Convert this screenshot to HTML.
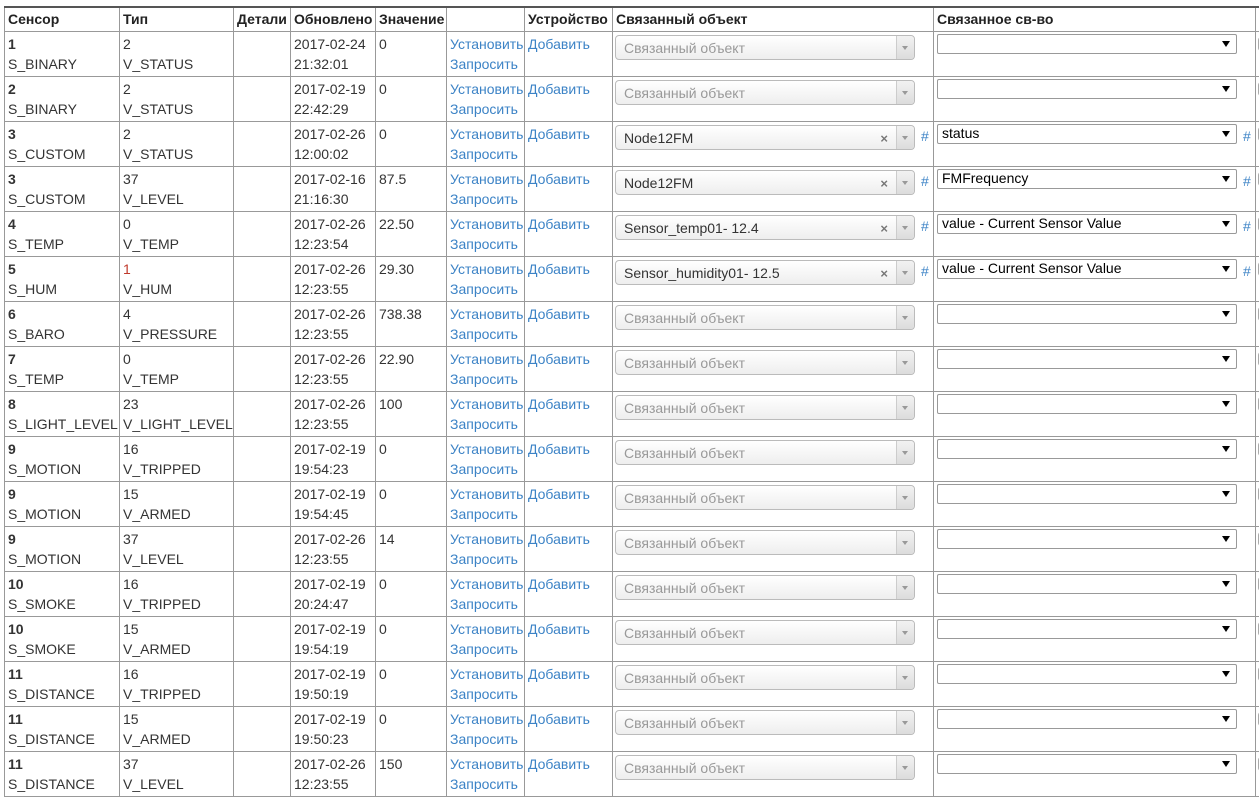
<!DOCTYPE html>
<html><head><meta charset="utf-8"><style>
body{margin:0;background:#fff;font-family:"Liberation Sans",Arial,sans-serif;font-size:14px;color:#333;overflow:hidden;width:1259px;height:803px}
table{position:absolute;left:4px;top:6px;border-collapse:collapse;table-layout:fixed;width:1300px}
td,th{border:1px solid #999;padding:2px 3px 0 3px;vertical-align:top;line-height:20px;text-align:left;white-space:nowrap;overflow:hidden}
th{height:22px;padding-top:1px;font-weight:bold;color:#222;border-top:2px solid #555}
td{height:42px;position:relative}
a{color:#3c83c6;text-decoration:none}
.s2{position:absolute;left:2px;top:3px;width:298px;height:23px;border:1px solid #bbb;border-radius:4px;background:linear-gradient(#fff,#eee);color:#999}
.s2 span{position:absolute;left:8px;top:2px}
.s2 .ar{position:absolute;right:0;top:0;width:17px;height:23px;border-left:1px solid #ccc;background:linear-gradient(#f2f2f2,#dcdcdc);border-radius:0 4px 4px 0}
.s2 .ar:after{content:"";position:absolute;left:5px;top:10px;border:3px solid transparent;border-top:4px solid #999}
.s2.v{color:#333;background:linear-gradient(#fff,#eee)}
.s2 .x{position:absolute;right:26px;top:3px;color:#777;font-size:13px;font-weight:bold}
.h1{position:absolute;left:308px;top:4px;color:#3c83c6}
.ns{position:absolute;left:3px;top:2px;width:298px;height:18px;border:1px solid #999;border-radius:2px;background:#fff;color:#000;line-height:17px}
.ns span{position:absolute;left:4px;top:0}
.ns:after{content:"";position:absolute;right:6px;top:6px;border:4px solid transparent;border-top:6px solid #000;border-bottom:0}
.h2{position:absolute;left:309px;top:4px;color:#3c83c6}
.cb{position:absolute;left:2px;top:5px;width:10px;height:12px;border:1px solid #aaa;border-radius:3px}
</style></head><body>
<table>
<colgroup><col style="width:115px"><col style="width:114px"><col style="width:57px"><col style="width:85px"><col style="width:71px"><col style="width:78px"><col style="width:88px"><col style="width:321px"><col style="width:322px"><col style="width:49px"></colgroup>
<tr><th>Сенсор</th><th>Тип</th><th>Детали</th><th>Обновлено</th><th>Значение</th><th></th><th>Устройство</th><th>Связанный объект</th><th>Связанное св-во</th><th>А</th></tr>
<tr><td><b>1</b><br>S_BINARY</td><td>2<br>V_STATUS</td><td></td><td>2017-02-24<br>21:32:01</td><td>0</td><td><a>Установить</a><br><a>Запросить</a></td><td><a>Добавить</a></td><td><div class="s2"><span>Связанный объект</span><div class="ar"></div></div></td><td><div class="ns"></div></td><td><div class="cb"></div></td></tr>
<tr><td><b>2</b><br>S_BINARY</td><td>2<br>V_STATUS</td><td></td><td>2017-02-19<br>22:42:29</td><td>0</td><td><a>Установить</a><br><a>Запросить</a></td><td><a>Добавить</a></td><td><div class="s2"><span>Связанный объект</span><div class="ar"></div></div></td><td><div class="ns"></div></td><td><div class="cb"></div></td></tr>
<tr><td><b>3</b><br>S_CUSTOM</td><td>2<br>V_STATUS</td><td></td><td>2017-02-26<br>12:00:02</td><td>0</td><td><a>Установить</a><br><a>Запросить</a></td><td><a>Добавить</a></td><td><div class="s2 v"><span>Node12FM</span><b class="x">×</b><div class="ar"></div></div><span class="h1">#</span></td><td><div class="ns"><span>status</span></div><span class="h2">#</span></td><td><div class="cb"></div></td></tr>
<tr><td><b>3</b><br>S_CUSTOM</td><td>37<br>V_LEVEL</td><td></td><td>2017-02-16<br>21:16:30</td><td>87.5</td><td><a>Установить</a><br><a>Запросить</a></td><td><a>Добавить</a></td><td><div class="s2 v"><span>Node12FM</span><b class="x">×</b><div class="ar"></div></div><span class="h1">#</span></td><td><div class="ns"><span>FMFrequency</span></div><span class="h2">#</span></td><td><div class="cb"></div></td></tr>
<tr><td><b>4</b><br>S_TEMP</td><td>0<br>V_TEMP</td><td></td><td>2017-02-26<br>12:23:54</td><td>22.50</td><td><a>Установить</a><br><a>Запросить</a></td><td><a>Добавить</a></td><td><div class="s2 v"><span>Sensor_temp01- 12.4</span><b class="x">×</b><div class="ar"></div></div><span class="h1">#</span></td><td><div class="ns"><span>value - Current Sensor Value</span></div><span class="h2">#</span></td><td><div class="cb"></div></td></tr>
<tr><td><b>5</b><br>S_HUM</td><td><span style="color:#c0392b">1</span><br>V_HUM</td><td></td><td>2017-02-26<br>12:23:55</td><td>29.30</td><td><a>Установить</a><br><a>Запросить</a></td><td><a>Добавить</a></td><td><div class="s2 v"><span>Sensor_humidity01- 12.5</span><b class="x">×</b><div class="ar"></div></div><span class="h1">#</span></td><td><div class="ns"><span>value - Current Sensor Value</span></div><span class="h2">#</span></td><td><div class="cb"></div></td></tr>
<tr><td><b>6</b><br>S_BARO</td><td>4<br>V_PRESSURE</td><td></td><td>2017-02-26<br>12:23:55</td><td>738.38</td><td><a>Установить</a><br><a>Запросить</a></td><td><a>Добавить</a></td><td><div class="s2"><span>Связанный объект</span><div class="ar"></div></div></td><td><div class="ns"></div></td><td><div class="cb"></div></td></tr>
<tr><td><b>7</b><br>S_TEMP</td><td>0<br>V_TEMP</td><td></td><td>2017-02-26<br>12:23:55</td><td>22.90</td><td><a>Установить</a><br><a>Запросить</a></td><td><a>Добавить</a></td><td><div class="s2"><span>Связанный объект</span><div class="ar"></div></div></td><td><div class="ns"></div></td><td><div class="cb"></div></td></tr>
<tr><td><b>8</b><br>S_LIGHT_LEVEL</td><td>23<br>V_LIGHT_LEVEL</td><td></td><td>2017-02-26<br>12:23:55</td><td>100</td><td><a>Установить</a><br><a>Запросить</a></td><td><a>Добавить</a></td><td><div class="s2"><span>Связанный объект</span><div class="ar"></div></div></td><td><div class="ns"></div></td><td><div class="cb"></div></td></tr>
<tr><td><b>9</b><br>S_MOTION</td><td>16<br>V_TRIPPED</td><td></td><td>2017-02-19<br>19:54:23</td><td>0</td><td><a>Установить</a><br><a>Запросить</a></td><td><a>Добавить</a></td><td><div class="s2"><span>Связанный объект</span><div class="ar"></div></div></td><td><div class="ns"></div></td><td><div class="cb"></div></td></tr>
<tr><td><b>9</b><br>S_MOTION</td><td>15<br>V_ARMED</td><td></td><td>2017-02-19<br>19:54:45</td><td>0</td><td><a>Установить</a><br><a>Запросить</a></td><td><a>Добавить</a></td><td><div class="s2"><span>Связанный объект</span><div class="ar"></div></div></td><td><div class="ns"></div></td><td><div class="cb"></div></td></tr>
<tr><td><b>9</b><br>S_MOTION</td><td>37<br>V_LEVEL</td><td></td><td>2017-02-26<br>12:23:55</td><td>14</td><td><a>Установить</a><br><a>Запросить</a></td><td><a>Добавить</a></td><td><div class="s2"><span>Связанный объект</span><div class="ar"></div></div></td><td><div class="ns"></div></td><td><div class="cb"></div></td></tr>
<tr><td><b>10</b><br>S_SMOKE</td><td>16<br>V_TRIPPED</td><td></td><td>2017-02-19<br>20:24:47</td><td>0</td><td><a>Установить</a><br><a>Запросить</a></td><td><a>Добавить</a></td><td><div class="s2"><span>Связанный объект</span><div class="ar"></div></div></td><td><div class="ns"></div></td><td><div class="cb"></div></td></tr>
<tr><td><b>10</b><br>S_SMOKE</td><td>15<br>V_ARMED</td><td></td><td>2017-02-19<br>19:54:19</td><td>0</td><td><a>Установить</a><br><a>Запросить</a></td><td><a>Добавить</a></td><td><div class="s2"><span>Связанный объект</span><div class="ar"></div></div></td><td><div class="ns"></div></td><td><div class="cb"></div></td></tr>
<tr><td><b>11</b><br>S_DISTANCE</td><td>16<br>V_TRIPPED</td><td></td><td>2017-02-19<br>19:50:19</td><td>0</td><td><a>Установить</a><br><a>Запросить</a></td><td><a>Добавить</a></td><td><div class="s2"><span>Связанный объект</span><div class="ar"></div></div></td><td><div class="ns"></div></td><td><div class="cb"></div></td></tr>
<tr><td><b>11</b><br>S_DISTANCE</td><td>15<br>V_ARMED</td><td></td><td>2017-02-19<br>19:50:23</td><td>0</td><td><a>Установить</a><br><a>Запросить</a></td><td><a>Добавить</a></td><td><div class="s2"><span>Связанный объект</span><div class="ar"></div></div></td><td><div class="ns"></div></td><td><div class="cb"></div></td></tr>
<tr><td><b>11</b><br>S_DISTANCE</td><td>37<br>V_LEVEL</td><td></td><td>2017-02-26<br>12:23:55</td><td>150</td><td><a>Установить</a><br><a>Запросить</a></td><td><a>Добавить</a></td><td><div class="s2"><span>Связанный объект</span><div class="ar"></div></div></td><td><div class="ns"></div></td><td><div class="cb"></div></td></tr>
</table>
</body></html>
